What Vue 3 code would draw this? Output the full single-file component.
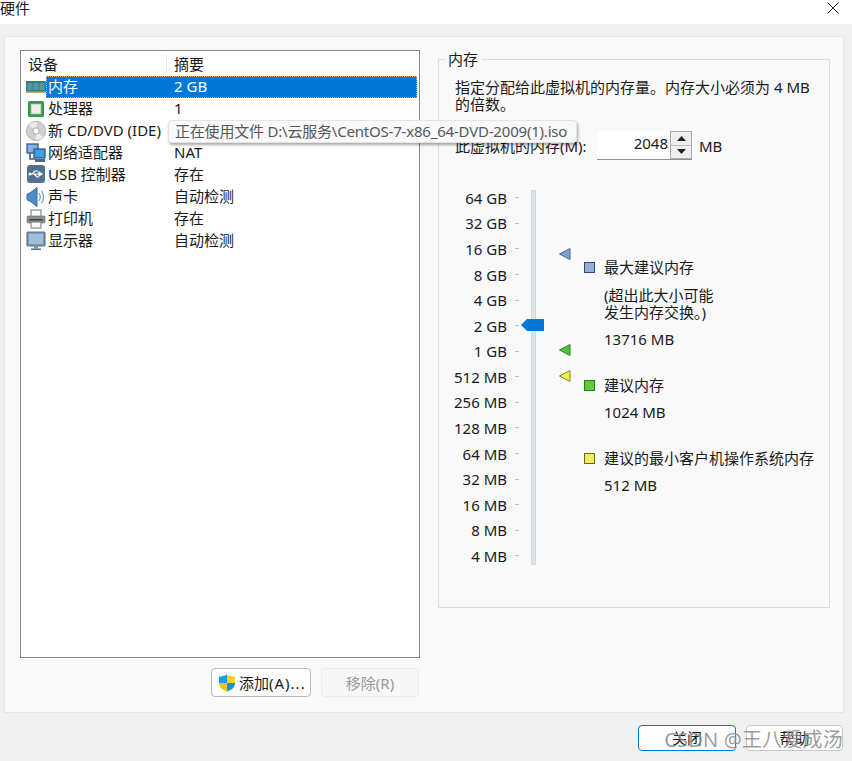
<script setup>
const rows = [
  { id: 'ram', name: '内存', sum: '2 GB', sel: true },
  { id: 'cpu', name: '处理器', sum: '1' },
  { id: 'cd', name: '新 CD/DVD (IDE)', sum: '' },
  { id: 'net', name: '网络适配器', sum: 'NAT' },
  { id: 'usb', name: 'USB 控制器', sum: '存在' },
  { id: 'snd', name: '声卡', sum: '自动检测' },
  { id: 'prn', name: '打印机', sum: '存在' },
  { id: 'mon', name: '显示器', sum: '自动检测' },
]
const scale = ['64 GB','32 GB','16 GB','8 GB','4 GB','2 GB','1 GB','512 MB','256 MB','128 MB','64 MB','32 MB','16 MB','8 MB','4 MB']
</script>

<template>
  <div class="win">
    <header class="title">
      <span>硬件</span>
      <svg width="12" height="12" viewBox="0 0 12 12"><path d="M.5.5l11 11M11.500.5l-11 11" stroke="#222" fill="none"/></svg>
    </header>

    <main class="panel">
      <section class="left">
        <div class="list">
          <div class="head">
            <span class="h1">设备</span>
            <span class="h2">摘要</span>
          </div>
          <div v-for="r in rows" :key="r.id" class="row">
            <svg class="ico" width="20" height="20" viewBox="0 0 20 20">
              <template v-if="r.id==='ram'">
                <rect x="0" y="4" width="20" height="12" fill="#27877f"/>
                <rect x="1.500" y="6" width="5" height="7" fill="#5a93ad"/>
                <rect x="7.500" y="6" width="5" height="7" fill="#5a93ad"/>
                <rect x="13.500" y="6" width="5" height="7" fill="#5a93ad"/>
                <rect x="0" y="14.500" width="20" height="1.500" fill="#b9b36a"/>
              </template>
              <template v-else-if="r.id==='cpu'">
                <rect x="2" y="2" width="16" height="16" rx="1.500" fill="#37994b"/>
                <rect x="5" y="5" width="10" height="10" fill="#eef0e8" stroke="#aeb9a6" stroke-width=".7"/>
              </template>
              <template v-else-if="r.id==='cd'">
                <circle cx="10" cy="10" r="9.700" fill="#cfcfcf" stroke="#a8a8a8" stroke-width=".7"/>
                <path d="M10 10L3 4a9 9 0 0 1 8-3zM10 10l7 6a9 9 0 0 1-7 3z" fill="#ededed"/>
                <circle cx="10" cy="10" r="3.200" fill="#f8f8f8" stroke="#999" stroke-width=".8"/>
              </template>
              <template v-else-if="r.id==='net'">
                <rect x="1" y="1" width="11" height="9" fill="#7fb2e0" stroke="#3a5a85" stroke-width="1.300"/>
                <path d="M4 10v6h5" stroke="#3a5a85" stroke-width="1.500" fill="none"/>
                <rect x="8" y="6" width="11" height="9" fill="#38a0e6" stroke="#34577f" stroke-width="1.300"/>
                <rect x="9" y="16" width="10" height="3" fill="#4d6a8c"/>
              </template>
              <template v-else-if="r.id==='usb'">
                <rect x="1" y="0" width="18" height="18" rx="3" fill="#54708f"/>
                <path d="M3 9h13M13 7l3 2-3 2zM6 9l3-3h3M8 9l3 3h2" stroke="#fff" stroke-width="1.200" fill="none"/>
                <circle cx="4" cy="9" r="1.500" fill="#fff"/>
              </template>
              <template v-else-if="r.id==='snd'">
                <path d="M1 7.500q1-1.500 3-1.500L11 .5v19L4 14q-2 0-3-1.500z" fill="#4d8ccf" stroke="#2f5f90" stroke-width=".9"/>
                <path d="M13 6q2.500 4 0 8M15.500 3.500q4 6.500 0 13" stroke="#7aa7d4" stroke-width="1.400" fill="none"/>
              </template>
              <template v-else-if="r.id==='prn'">
                <rect x="5" y="1" width="10" height="7" fill="#fafafa" stroke="#777"/>
                <rect x="1" y="7" width="18" height="7" rx="1" fill="#8a8f96" stroke="#666" stroke-width=".6"/>
                <rect x="3" y="10" width="14" height="1.500" fill="#40464c"/>
                <rect x="5" y="13" width="10" height="6" fill="#fafafa" stroke="#777"/>
                <circle cx="16.500" cy="8.800" r=".8" fill="#4c4"/>
              </template>
              <template v-else>
                <rect x="1" y="1" width="18" height="14" rx="1" fill="#6f9cc0" stroke="#66717c" stroke-width="1.200"/>
                <rect x="3" y="3" width="14" height="10" fill="#9fc0d8"/>
                <rect x="8" y="15" width="4" height="2.500" fill="#8a949d"/>
                <rect x="5" y="17.500" width="10" height="1.500" fill="#5f6a74"/>
              </template>
            </svg>
            <div class="cells" :class="{ sel: r.sel }">
              <span class="name">{{ r.name }}</span>
              <span>{{ r.sum }}</span>
            </div>
          </div>
        </div>
        <div class="actions">
          <button class="btn add">
            <svg width="18" height="18" viewBox="0 0 18 18">
              <path d="M9 0.500C6.500 2 4 2.500 1 2.500V9h8z" fill="#1e9be8"/>
              <path d="M9 0.500C11.500 2 14 2.500 17 2.500V9H9z" fill="#ffd11f"/>
              <path d="M1 9c0 4 3 7 8 8.500V9z" fill="#ffc21a"/>
              <path d="M17 9c0 4-3 7-8 8.500V9z" fill="#1e8fdc"/>
            </svg>
            <span>添加<span class="acc">(A)...</span></span>
          </button>
          <button class="btn off">移除(R)</button>
        </div>
      </section>

      <section class="group">
        <div class="legend">内存</div>
        <p class="desc">指定分配给此虚拟机的内存量。内存大小必须为 4 MB<br>的倍数。</p>
        <div class="mem">
          <label>此虚拟机的内存(M):</label>
          <div class="spin">
            <span class="val">2048</span>
            <span class="arrows">
              <i><svg width="9" height="5" viewBox="0 0 9 5"><path d="M4.500 0L9 5H0z" fill="#222"/></svg></i>
              <i><svg width="9" height="5" viewBox="0 0 9 5"><path d="M0 0h9L4.500 5z" fill="#222"/></svg></i>
            </span>
          </div>
          <span class="unit">MB</span>
        </div>
        <div class="scale-area">
          <div class="labels">
            <div v-for="s in scale" :key="s" class="lab"><span>{{ s }}</span><b></b></div>
          </div>
          <div class="track">
            <svg class="thumb" width="23" height="12" viewBox="0 0 23 12"><path d="M0 6L6 0H23V12H6z" fill="#0078d7"/></svg>
          </div>
          <div class="marks">
            <svg class="mk m1" width="12" height="12" viewBox="0 0 12 12"><path d="M11 0.500V11.500L0.500 6z" fill="#7ea1cb" stroke="#44648c"/></svg>
            <svg class="mk m2" width="12" height="12" viewBox="0 0 12 12"><path d="M11 0.500V11.500L0.500 6z" fill="#4fc43a" stroke="#2f7f2a"/></svg>
            <svg class="mk m3" width="12" height="12" viewBox="0 0 12 12"><path d="M11 0.500V11.500L0.500 6z" fill="#f0ee4a" stroke="#85832c"/></svg>
          </div>
          <div class="info">
            <div class="key k1"><i class="sq blue"></i>最大建议内存</div>
            <p class="note">(超出此大小可能<br>发生内存交换。)</p>
            <p class="num n1">13716 MB</p>
            <div class="key k2"><i class="sq green"></i>建议内存</div>
            <p class="num n2">1024 MB</p>
            <div class="key k3"><i class="sq yellow"></i>建议的最小客户机操作系统内存</div>
            <p class="num n2">512 MB</p>
          </div>
        </div>
      </section>

      <div class="tip">正在使用文件 D:\云服务\CentOS-7-x86_64-DVD-2009(1).iso</div>
    </main>

    <footer class="foot">
      <button class="btn primary">关闭</button>
      <button class="btn help">帮助</button>
    </footer>
    <div class="mark">CSDN @王八爱成汤</div>
  </div>
</template>

<style>
html, body { margin: 0; background: #f0f0f0; }
</style>

<style scoped>
.win {
  position: relative;
  width: 852px;
  height: 761px;
  overflow: hidden;
  background: #f0f0f0;
  color: #1a1a1a;
  font: 15px/18px "Noto Sans", "Noto Sans CJK SC", sans-serif;
}
.title {
  height: 24px;
  background: #fff;
  display: flex;
  justify-content: space-between;
  align-items: center;
  padding: 0 13px 8px 0;
  box-sizing: border-box;
}
.panel {
  position: relative;
  margin: 12px 8px 0 4px;
  height: 677px;
  box-sizing: border-box;
  background: #f9f9f9;
  border: 1px solid #e5e5e5;
  padding: 13px 12px 0 15px;
  display: flex;
  gap: 18px;
  align-items: flex-start;
}
.left { width: 400px; }
.list {
  height: 608px;
  box-sizing: border-box;
  background: #fff;
  border: 1px solid #828790;
}
.head {
  height: 25px;
  display: flex;
  align-items: center;
}
.h1 { width: 146px; padding-left: 7px; box-sizing: border-box; border-right: 1px solid #e5e5e5; }
.h2 { padding-left: 7px; }
.row { height: 22px; display: flex; padding-left: 5px; padding-right: 2px; }
.ico { flex: none; margin-top: 1px; }
.cells { flex: 1; display: flex; align-items: center; padding: 0 0 2px 2px; box-sizing: border-box; }
.name { width: 126px; white-space: nowrap; }
.sel {
  background: #0078d7;
  color: #fff;
  outline: 1px dotted #f2a65c;
  outline-offset: -1px;
}
.actions {
  margin-top: 10px;
  display: flex;
  justify-content: flex-end;
  gap: 10px;
  padding-right: 1px;
}
.btn {
  box-sizing: border-box;
  font: inherit;
  color: #1a1a1a;
  background: #fdfdfd;
  border: 1px solid #bdbdbd;
  border-radius: 4px;
  padding: 0;
  display: flex;
  align-items: center;
  justify-content: center;
}
.add { width: 100px; height: 29px; gap: 3px; justify-content: flex-start; padding-left: 6px; white-space: nowrap; }
.acc { letter-spacing: 1px; }
.off { width: 98px; height: 29px; color: #9a9a9a; background: #f7f7f7; border-color: #ececec; }
.group {
  position: relative;
  width: 392px;
  height: 549px;
  margin-top: 9px;
  box-sizing: border-box;
  border: 1px solid #dcdcdc;
  padding: 0 16px;
}
.legend {
  width: fit-content;
  margin: -10px 0 0 -10px;
  padding: 0 4px 0 3px;
  background: #f9f9f9;
  line-height: 18px;
}
.desc { margin: 11px 0 0; line-height: 17px; white-space: nowrap; }
.mem { display: flex; align-items: center; margin-top: 18px; height: 29px; }
.mem label { width: 142px; line-height: 32px; }
.spin {
  width: 95px;
  height: 29px;
  display: flex;
  background: #fff;
  border-bottom: 1px solid #8f8f8f;
  box-sizing: border-box;
}
.val { flex: 1; text-align: right; padding-right: 2px; line-height: 25px; }
.arrows {
  width: 22px;
  display: flex;
  flex-direction: column;
  background: #e4e4e4;
  border: 1px solid #aaa;
  box-sizing: border-box;
}
.arrows i {
  flex: 1;
  display: flex;
  align-items: center;
  justify-content: center;
  background: #efefef;
  border-bottom: 1px solid #bbb;
}
.arrows i:last-child { border-bottom: none; }
.unit { margin-left: 7px; line-height: 32px; }
.scale-area { display: flex; margin-top: 30px; height: 375px; }
.labels { width: 80px; margin-top: -5px; flex: none; margin-left: -16px; }
.lab {
  height: 25.580px;
  display: flex;
  justify-content: flex-end;
  align-items: center;
  gap: 8px;
  white-space: nowrap;
}
.lab b { width: 4px; height: 1px; background: #c4c4c4; }
.track {
  position: relative;
  width: 5px;
  margin-left: 12px;
  height: 375px;
  flex: none;
  background: #dfe3e5;
  border: 1px solid #d5d8da;
  box-sizing: border-box;
}
.thumb { position: absolute; left: -11px; top: 128px; }
.marks { position: relative; width: 14px; margin-left: 23px; flex: none; }
.mk { position: absolute; left: 0; }
.m1 { top: 58px; }
.m2 { top: 154px; }
.m3 { top: 180px; }
.info { margin-left: 11px; white-space: nowrap; }
.key { display: flex; align-items: center; gap: 9px; }
.k1 { margin-top: 68px; }
.k2 { margin-top: 28px; }
.k3 { margin-top: 28px; }
.sq { width: 9px; height: 9px; border: 1px solid #333; flex: none; }
.blue { background: #92aed3; border-color: #2b4a75; }
.green { background: #5ecb38; border-color: #2f7a1f; }
.yellow { background: #f0ee58; border-color: #6a6a28; }
.note { margin: 11px 0 0 20px; line-height: 17px; }
.num { margin: 0 0 0 20px; }
.n1 { margin-top: 9px; }
.n2 { margin-top: 9px; }
.tip {
  position: absolute;
  left: 163px;
  top: 83px;
  width: 409px;
  height: 23px;
  box-sizing: border-box;
  padding-left: 6px;
  line-height: 21px;
  letter-spacing: -0.200px;
  color: #575757;
  background: #f9f9f9;
  border: 1px solid #e4e4e4;
  border-radius: 4px;
  box-shadow: 1px 2px 3px rgba(0, 0, 0, .35);
  white-space: nowrap;
}
.foot {
  display: flex;
  justify-content: flex-end;
  gap: 10px;
  margin-top: 12px;
  padding-right: 9px;
}
.foot .btn { height: 26px; width: 98px; }
.primary { border-color: #0078d7; background: #fdfdfd; }
.foot .help { width: 97px; border-color: #c8c8c8; }
.mark {
  position: absolute;
  right: 9px;
  top: 728px;
  font-size: 20px;
  line-height: 24px;
  letter-spacing: .2px;
  color: rgba(90, 90, 90, .6);
  text-shadow: 0 0 1px rgba(255, 255, 255, .7);
  white-space: nowrap;
}
</style>
